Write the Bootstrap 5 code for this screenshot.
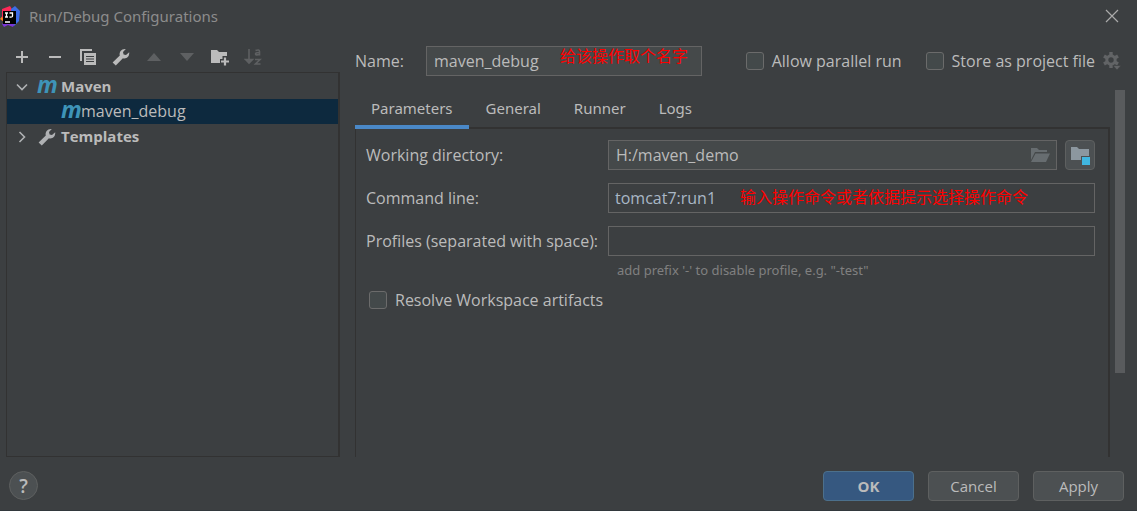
<!DOCTYPE html>
<html lang="en">
<head>
<meta charset="utf-8">
<meta name="viewport" content="width=device-width, initial-scale=1">
<title>Run/Debug Configurations</title>
<link href="https://cdn.jsdelivr.net/npm/bootstrap@5.3.0/dist/css/bootstrap.min.css" rel="stylesheet">
<style>
body{background:#3c3f41;color:#bbb;font-family:"Open Sans","Noto Sans CJK SC",sans-serif;font-size:16px;line-height:20px}
svg{display:block;flex:none}
.dialog{border-bottom:1px solid #32383c}
.title-bar{height:32px;padding:0 16px 0 0;color:#8c8c8c}
.title-bar h1{font:400 15px/20px "Noto Sans",sans-serif}
.tool{width:33px;height:30px;color:#afb1b3}
.tool:disabled{color:#5e6062;opacity:1;border:0}
.plain{background:none;border:0;padding:0;color:inherit;display:flex;align-items:center;justify-content:center}
.sidebar{flex:0 0 334px;margin-left:6px}
.tools{height:40px;padding-top:10px;margin-left:-1px}
.tree{border:1px solid #323232;border-right-width:2px;padding-top:1px}
.tree li{height:25px;line-height:25px;color:#bbb}
.tree b{font-size:15px}
.tree .picked{background:#0d293e;padding-left:54px}
.m-logo{color:#3e94b8;font:italic 700 23px/20px "Open Sans",sans-serif;width:20px;height:25px}
.main-pane{margin-left:15px;padding-right:12px}
.name-row{height:58px;padding-right:4px}
.name-row .caption{width:71px}
.field{background:#45494a;border:1px solid #646464;border-radius:0;color:#bbb;font-size:16px;line-height:20px;padding:4px 7px;height:30px;min-height:0}
.field:focus{background:#45494a;color:#bbb;box-shadow:none}
.field.editor{background:#3c3f41;color:#a9b7c6;padding-left:6px}
.name-box{width:276px}
.note-text{color:#f00;font:400 16px/18px "Noto Sans CJK SC",sans-serif;white-space:nowrap;pointer-events:none}
.name-box .note-text{left:134px;top:0}
.command .note-text{left:132px;top:4px}
.tick{appearance:none;width:18px;height:18px;background:#43494a;border:1px solid #6b6b6b;border-radius:3px;margin:0;flex:none}
.tick:checked{background:#4a88c7}
.tabs{height:39px;column-gap:1px}
.tabs .nav-link{background:none;color:#bbb;border:0;border-radius:0;padding:6px 16px 9px;font:400 15px/20px "Noto Sans",sans-serif;height:39px}
.tabs .nav-link.active{border-bottom:4px solid #4a88c7;padding-bottom:5px;position:relative;z-index:1}
.panel{border:solid #323232;border-width:2px 2px 0 1px;margin-top:-2px;padding:11px 13px 0 10px}
.form-grid{display:grid;grid-template-columns:242px minmax(0,1fr);row-gap:13px;align-items:center}
.hint{color:#808080;font:400 13px/18px "Noto Sans",sans-serif;padding-left:9px;margin-top:-8px}
.resolve{margin-top:11px;padding-left:3px}
.open-dir{right:7px;top:8px;color:#676d70}
.side-btn{width:30px;height:30px;border:1px solid #5e6060;border-radius:4px;background:#4c5052}
.scroll-lane{width:10px;margin-left:5px}
.scroll-thumb{height:77%;background:#595b5d}
.footer-bar{height:53px;padding:4px 13px 0 9px;gap:14px}
.act{width:91px;height:30px;padding:0;border:1px solid #5e6060;border-radius:4px;background:#4c5052;color:#bbb;font-size:15px;line-height:20px}
.act.main-act{background:#365880;border-color:#4c708c;font-weight:700}
.help{width:29px;height:29px;border:1px solid #5e6060;border-radius:50%;background:#4c5052;color:#bbb;font-size:19px;line-height:24px;font-weight:600}
</style>
</head>
<body>
<div class="dialog min-vh-100 d-flex flex-column">
  <header class="title-bar d-flex align-items-center">
    <svg width="21" height="24" viewBox="0 0 21 24" aria-hidden="true">
      <path d="M0 15l4-5 4 6-4 2z" fill="#fc801d"/><path d="M2 5l8-3 3 5-7 11-4-5z" fill="#fe2857"/>
      <path d="M11 5l4-3 5 5-1 10-5 5-4-3z" fill="#3d6de8"/><path d="M2 20l5-4 8 3-2 4-5-2-4 2z" fill="#7b35d8"/>
      <rect x="3" y="7" width="13" height="13"/>
      <path d="M5 9h3M6.500 9v4M5 13h3M9.500 9h3v3q0 1.500-3 1M5 18h5" fill="none" stroke="#fff" stroke-width="1.300"/>
    </svg>
    <h1 class="m-0 ms-2 flex-grow-1">Run/Debug Configurations</h1>
    <button class="plain" type="button" aria-label="Close"><svg width="18" height="18" viewBox="0 0 18 18"><path d="M3 3l12 12M15 3L3 15" stroke="#aaa" stroke-width="1.200"/></svg></button>
  </header>

  <div class="d-flex flex-grow-1">
    <aside class="sidebar d-flex flex-column">
      <div class="tools d-flex align-items-center" role="toolbar" aria-label="Configuration tools">
        <button class="tool plain" type="button" aria-label="Add"><svg width="14" height="14" viewBox="0 0 14 14"><path d="M7 1v12M1 7h12" stroke="currentColor" stroke-width="2"/></svg></button>
        <button class="tool plain" type="button" aria-label="Remove"><svg width="14" height="14" viewBox="0 0 14 14"><path d="M1 7h12" stroke="currentColor" stroke-width="2"/></svg></button>
        <button class="tool plain" type="button" aria-label="Copy"><svg width="18" height="18" viewBox="0 0 18 18"><path d="M1 1h12v2H3v10H1z" fill="currentColor"/><path fill-rule="evenodd" d="M5 5h12v12H5zM7 8v1h8V8zM7 10.500v1h8v-1zM7 13v1h8v-1z" fill="currentColor"/></svg></button>
        <button class="tool plain" type="button" aria-label="Edit templates"><svg width="18" height="18" viewBox="0 0 18 18"><path id="wrench" d="M.6 14.500L7.800 7.500C6.900 4.300 9.500.6 13.800 1.100L11 4l.6 2.500L14 7l3.200-2.800c.5 4.500-3 7-6.300 6L3.800 17.600z" fill="currentColor"/></svg></button>
        <button class="tool plain" type="button" aria-label="Move up" disabled><svg width="16" height="16" viewBox="0 0 16 16"><path d="M1 12l7-8 7 8z" fill="currentColor"/></svg></button>
        <button class="tool plain" type="button" aria-label="Move down" disabled><svg width="16" height="16" viewBox="0 0 16 16"><path d="M1 4l7 8 7-8z" fill="currentColor"/></svg></button>
        <button class="tool plain" type="button" aria-label="New folder"><svg width="20" height="18" viewBox="0 0 20 18"><path d="M1 2h6l2 2h8v11H1z" fill="currentColor"/><path d="M15 8v10M10 13.500h10" stroke="#3c3f41" stroke-width="5"/><path d="M15 9.500v8M11 13.500h8" stroke="currentColor" stroke-width="2.200"/></svg></button>
        <button class="tool plain" type="button" aria-label="Sort alphabetically" disabled><svg width="18" height="18" viewBox="0 0 18 18"><path d="M5 1v14M1.500 11.500L5 15l3.500-3.500z" fill="currentColor" stroke="currentColor" stroke-width="1.600"/><path d="M11.500 2.500q4-1.500 4 1V7.500M15.500 4.500q-4 0-4 1.500t4 .5M11 11.500h5l-4.500 4.500h5" fill="none" stroke="currentColor" stroke-width="1.600"/></svg></button>
      </div>
      <ul class="tree list-unstyled m-0 flex-grow-1" role="tree">
        <li class="d-flex align-items-center" role="treeitem">
          <svg class="ms-2" width="14" height="14" viewBox="0 0 14 14"><path d="M2 4.500l5 5 5-5" fill="none" stroke="#afb1b3" stroke-width="1.600"/></svg>
          <span class="m-logo ms-2" aria-hidden="true">m</span><b class="ms-1">Maven</b></li>
        <li class="picked d-flex align-items-center" role="treeitem" aria-selected="true">
          <span class="m-logo" aria-hidden="true">m</span><span>maven_debug</span></li>
        <li class="d-flex align-items-center" role="treeitem">
          <svg class="ms-2" width="14" height="14" viewBox="0 0 14 14"><path d="M4.500 2l5 5-5 5" fill="none" stroke="#afb1b3" stroke-width="1.600"/></svg>
          <svg class="ms-2" width="20" height="18" viewBox="-1 0 20 18" color="#afb1b3"><use href="#wrench"/></svg>
          <b class="ms-1">Templates</b></li>
      </ul>
    </aside>

    <main class="main-pane d-flex flex-column flex-grow-1">
      <div class="name-row d-flex align-items-center">
        <label for="name" class="caption">Name:</label>
        <div class="name-box position-relative me-auto"><input id="name" class="field form-control" type="text" value="maven_debug"><span class="note-text position-absolute">给该操作取个名字</span></div>
        <label class="d-flex align-items-center gap-2 text-nowrap"><input class="tick" type="checkbox">Allow parallel run</label>
        <label class="ms-4 d-flex align-items-center gap-2 text-nowrap"><input class="tick" type="checkbox">Store as project file</label>
        <button class="plain ms-2" type="button" aria-label="Storage options"><svg width="18" height="20" viewBox="0 0 18 20" color="#626466"><circle cx="8" cy="9" r="4.200" fill="none" stroke="currentColor" stroke-width="3"/><path d="M8 1v3.500M8 13.500V17M1 5l3 1.800M12 11.200l3 1.800M1 13l3-1.800M12 6.800L15 5" stroke="currentColor" stroke-width="3.400"/><path d="M10 14.500h8l-4 4.500z" fill="currentColor" stroke="#3c3f41" stroke-width=".6"/></svg></button>
      </div>
      <div class="d-flex flex-grow-1">
        <section class="d-flex flex-column flex-grow-1">
          <div class="tabs nav" role="tablist">
            <button class="nav-link active" type="button" role="tab" aria-selected="true">Parameters</button>
            <button class="nav-link" type="button" role="tab">General</button>
            <button class="nav-link" type="button" role="tab">Runner</button>
            <button class="nav-link" type="button" role="tab">Logs</button>
          </div>
          <div class="panel flex-grow-1" role="tabpanel">
            <div class="form-grid">
              <label for="dir">Working directory:</label>
              <div class="d-flex align-items-center gap-2">
                <div class="position-relative flex-grow-1"><input id="dir" class="field form-control" type="text" value="H:/maven_demo">
                  <svg class="open-dir position-absolute" width="19" height="15" viewBox="0 0 19 15"><path d="M0 0h6l2 2h8v2H4L0 12zM4.500 5.500H19L15 14H0z" fill="currentColor"/></svg></div>
                <button class="side-btn plain" type="button" aria-label="Choose module directory"><svg width="20" height="20" viewBox="0 0 20 20"><path d="M1 2h6l2 2h10v11H1z" fill="#8c979f"/><path d="M11 11h9v9h-9z" fill="#4c5052"/><path d="M12 12h8v8h-8z" fill="#40b6e0"/></svg></button>
              </div>
              <label for="cmd">Command line:</label>
              <div class="command position-relative"><input id="cmd" class="field editor form-control" type="text" value="tomcat7:run1"><span class="note-text position-absolute">输入操作命令或者依据提示选择操作命令</span></div>
              <label for="profiles">Profiles (separated with space):</label>
              <div><input id="profiles" class="field editor form-control" type="text" aria-describedby="hint"></div>
              <span></span><div class="hint" id="hint">add prefix '-' to disable profile, e.g. "-test"</div>
            </div>
            <label class="resolve d-flex align-items-center gap-2"><input class="tick" type="checkbox">Resolve Workspace artifacts</label>
          </div>
        </section>
        <div class="scroll-lane"><div class="scroll-thumb"></div></div>
      </div>
    </main>
  </div>

  <footer class="footer-bar d-flex align-items-center">
    <button class="help plain me-auto" type="button" aria-label="Help">?</button>
    <button class="act main-act btn" type="button">OK</button>
    <button class="act btn" type="button">Cancel</button>
    <button class="act btn" type="button">Apply</button>
  </footer>
</div>
<script src="https://cdn.jsdelivr.net/npm/bootstrap@5.3.0/dist/js/bootstrap.bundle.min.js"></script>
</body>
</html>
